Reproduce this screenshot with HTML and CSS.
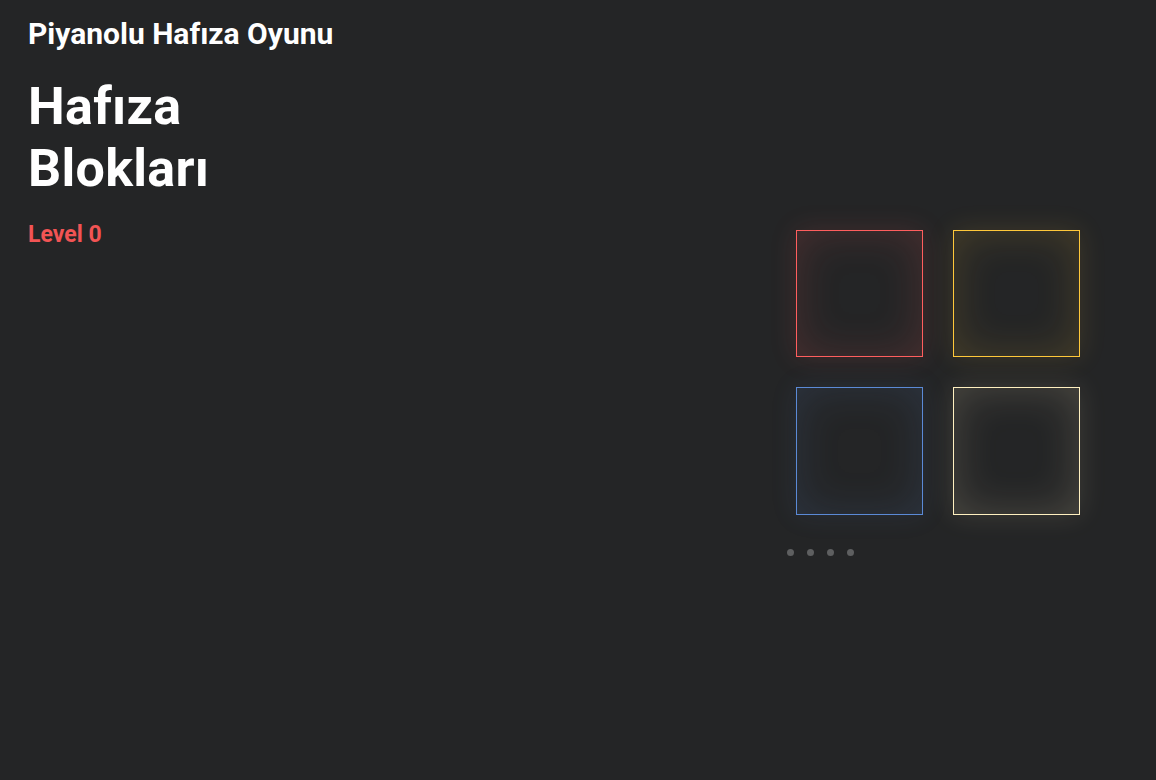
FILE: index.html
```html
<!DOCTYPE html>
<html lang="tr">
<head>
<meta charset="utf-8">
<title>Piyanolu Hafıza Oyunu</title>
<link rel="stylesheet" href="styles.css">
</head>
<body>
<div class="page">
  <header class="topbar">
    <h1 class="app-title">Piyanolu Hafıza Oyunu</h1>
  </header>
  <main class="main">
    <section class="info">
      <h2 class="game-title">Hafıza<br>Blokları</h2>
      <p class="level">Level 0</p>
    </section>
    <section class="stage">
      <div class="board">
        <div class="block block-red"></div>
        <div class="block block-yellow"></div>
        <div class="block block-blue"></div>
        <div class="block block-cream"></div>
      </div>
      <div class="dots">
        <span class="dot"></span>
        <span class="dot"></span>
        <span class="dot"></span>
        <span class="dot"></span>
      </div>
    </section>
  </main>
</div>
</body>
</html>
```

FILE: styles.css
```css
* { box-sizing: border-box; }
html, body {
  margin: 0;
  padding: 0;
  background: #242526;
  height: 100%;
}
body {
  font-family: Roboto, "Liberation Sans", Arial, sans-serif;
  color: #ffffff;
}
.page {
  padding: 16px 28px 0 28px;
}
.app-title {
  margin: 0;
  font-size: 30px;
  font-weight: 700;
  line-height: 36px;
}
.main {
  display: flex;
  justify-content: space-between;
  align-items: flex-start;
}
.game-title {
  margin: 24px 0 0 0;
  font-size: 52px;
  font-weight: 700;
  line-height: 62px;
  letter-spacing: 0.3px;
}
.level {
  margin: 22px 0 0 0;
  font-size: 23px;
  font-weight: 700;
  color: #f25454;
  line-height: 26px;
}
.stage {
  margin-top: 178px;
  margin-right: 48px;
  display: flex;
  flex-direction: column;
  align-items: flex-start;
}
.board {
  display: grid;
  grid-template-columns: 127px 127px;
  grid-template-rows: 127px 128px;
  gap: 30px;
  margin-left: 9px;
}
.block {
  border: 1px solid;
}
.block-red {
  border-color: #ff5e5e;
  box-shadow: 0 0 26px rgba(255, 94, 94, 0.13), inset 0 0 44px rgba(255, 94, 94, 0.17);
}
.block-yellow {
  border-color: #ffc83a;
  box-shadow: 0 0 26px rgba(255, 200, 58, 0.12), inset 0 0 44px rgba(255, 200, 58, 0.16);
}
.block-blue {
  border-color: #5b8ad6;
  box-shadow: 0 0 26px rgba(91, 138, 214, 0.1), inset 0 0 44px rgba(91, 138, 214, 0.15);
}
.block-cream {
  border-color: #fff0c0;
  box-shadow: 0 0 26px rgba(255, 240, 192, 0.12), inset 0 0 44px rgba(255, 240, 192, 0.18);
}
.dots {
  display: flex;
  gap: 13px;
  margin-top: 34px;
}
.dot {
  width: 7px;
  height: 7px;
  border-radius: 50%;
  background: #5e5f60;
}
```
